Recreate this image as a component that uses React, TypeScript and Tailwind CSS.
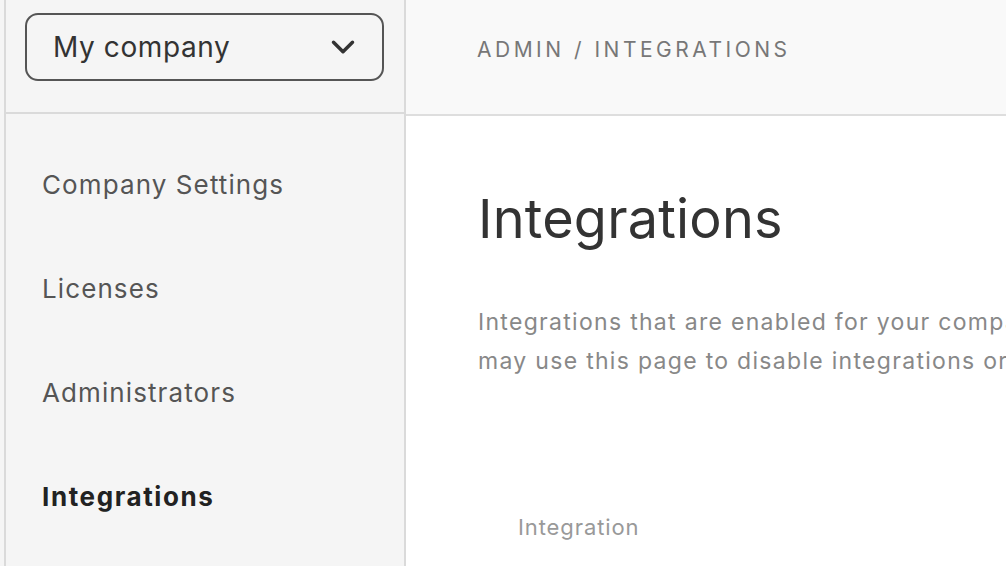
import { ChevronDown } from "lucide-react"

const navItems = [
  { label: "Company Settings", active: false },
  { label: "Licenses", active: false },
  { label: "Administrators", active: false },
  { label: "Integrations", active: true },
]

export default function App() {
  return (
    <div
      className="flex h-[566px] w-[1006px] overflow-hidden bg-[#f5f5f5] pl-1"
      style={{ fontFamily: "Inter, 'Noto Sans', sans-serif" }}
    >
      {/* Sidebar */}
      <aside className="flex w-[402px] shrink-0 flex-col border-x-2 border-[#dadada] bg-[#f5f5f5]">
        <div className="flex h-[114px] shrink-0 items-start border-b-2 border-[#dadada] px-[19px] pt-[13px]">
          <button className="flex h-[68px] w-[359px] items-center justify-between rounded-[13px] border-2 border-[#555555] pl-[26px] pr-[20px] text-[28px] tracking-[0.6px] text-[#333333]">
            <span>My company</span>
            <ChevronDown className="h-[38px] w-[38px] text-[#333333]" strokeWidth={2.2} />
          </button>
        </div>
        <nav className="flex flex-col pl-[36px] pt-[51px]">
          {navItems.map((item) => (
            <a
              key={item.label}
              className={`flex h-[104px] items-start text-[26px] ${
                item.active ? "font-bold tracking-[1.6px] text-[#222222]" : "tracking-[1.1px] text-[#555555]"
              }`}
            >
              {item.label}
            </a>
          ))}
        </nav>
      </aside>

      {/* Main */}
      <main className="flex min-w-0 flex-1 flex-col bg-white">
        <header className="flex h-[116px] shrink-0 items-start border-b-2 border-[#dedede] bg-[#f9f9f9] pl-[71px] pt-[34px]">
          <span className="text-[21px] tracking-[3.5px] text-[#777777]">ADMIN / INTEGRATIONS</span>
        </header>
        <section className="whitespace-nowrap pl-[72px] pt-[76px]">
          <h1 className="text-[54px] leading-none tracking-[0.2px] text-[#333333]">Integrations</h1>
          <p className="mt-[57px] text-[23px] leading-[39px] tracking-[1.3px] text-[#888888]">
            Integrations that are enabled for your company are listed below. Administrators
            <br />
            may use this page to disable integrations or to configure them for all users.
          </p>
          <div className="mt-[130px] pl-[40px] text-[22px] tracking-[0.9px] text-[#999999]">Integration</div>
        </section>
      </main>
    </div>
  )
}
